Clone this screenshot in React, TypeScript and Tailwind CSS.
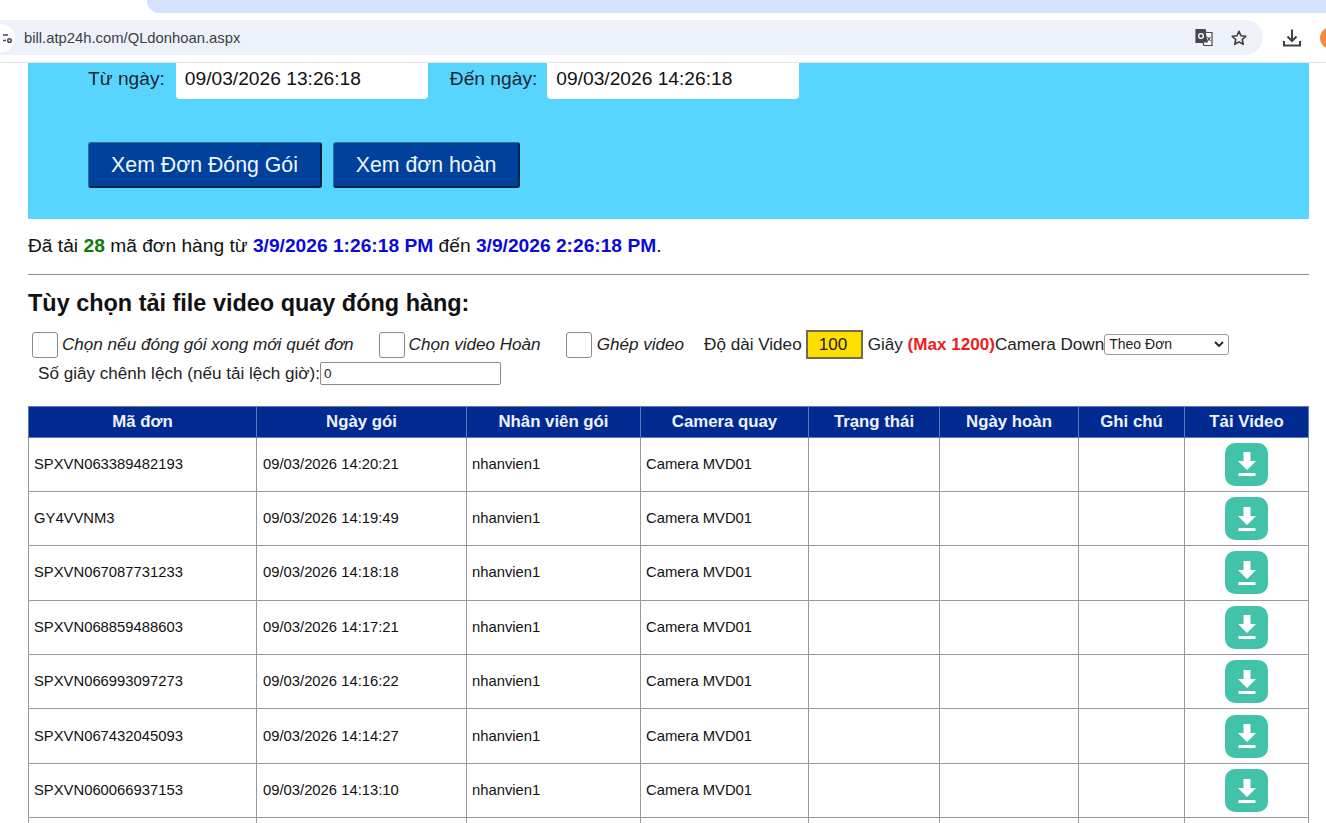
const font = "font-['Liberation_Sans',Arial,sans-serif]";

const rows = [
  ["SPXVN063389482193", "09/03/2026 14:20:21"],
  ["GY4VVNM3", "09/03/2026 14:19:49"],
  ["SPXVN067087731233", "09/03/2026 14:18:18"],
  ["SPXVN068859488603", "09/03/2026 14:17:21"],
  ["SPXVN066993097273", "09/03/2026 14:16:22"],
  ["SPXVN067432045093", "09/03/2026 14:14:27"],
  ["SPXVN060066937153", "09/03/2026 14:13:10"],
];

const headers = ["Mã đơn", "Ngày gói", "Nhân viên gói", "Camera quay", "Trạng thái", "Ngày hoàn", "Ghi chú", "Tải Video"];
const widths = ["w-[228px]", "w-[210px]", "w-[174px]", "w-[168px]", "w-[131px]", "w-[139px]", "w-[106px]", "w-[124px]"];

function DownloadButton() {
  return (
    <div className="mx-auto flex h-[43px] w-[43px] items-center justify-center rounded-[10px] bg-[#42c2a8]">
      <svg width="24" height="28" viewBox="0 0 24 28" fill="#ffffff">
        <path d="M8.5 2h7v9h5.5L12 20 3 11h5.5z" />
        <rect x="3.5" y="23" width="17" height="3" />
      </svg>
    </div>
  );
}

function BrowserBar() {
  return (
    <div className="h-[63px] border-b border-[#e3e6ea] bg-white">
      <div className="ml-[147px] h-[13px] rounded-bl-[12px] bg-[#d3e3fd]" />
      <div className="mt-[7px] flex items-center">
        <div className="flex h-[35px] w-[1263px] shrink-0 items-center rounded-r-[18px] bg-[#edf2fa]">
          <div className="flex h-[28px] w-[15px] items-center justify-end rounded-r-full bg-white pr-[2px]">
            <svg width="10" height="12" viewBox="0 0 10 12" fill="none" stroke="#45484d" strokeWidth="1.5">
              <path d="M0 3h5M0 8.5h3" />
              <circle cx="6.5" cy="8.5" r="1.8" />
            </svg>
          </div>
          <span className="ml-[9px] pt-[1px] text-[14.8px] text-[#3c4043]">bill.atp24h.com/QLdonhoan.aspx</span>
          <div className="ml-auto flex items-center gap-[16px] pr-[15px]">
            <svg width="19" height="19" viewBox="0 0 19 19">
              <path d="M1 1.5h9l1 3h6v13H9l-1-3H1z" fill="#ffffff" stroke="#45484d" strokeWidth="1.2" />
              <path d="M1 1.5h9l3 13H1z" fill="#45484d" />
              <circle cx="6" cy="8" r="2.4" fill="none" stroke="#ffffff" strokeWidth="1.3" />
              <path d="M12.5 9l3 4M15.5 9l-3 4" stroke="#45484d" strokeWidth="1.1" />
            </svg>
            <svg width="18" height="18" viewBox="0 0 24 24" fill="none" stroke="#3c4043" strokeWidth="2.2" strokeLinejoin="round">
              <path d="M12 3l2.7 6 6.3.7-4.7 4.3 1.3 6.4L12 17.2l-5.6 3.2 1.3-6.4L3 9.7 9.3 9z" />
            </svg>
          </div>
        </div>
        <svg className="ml-[19px] shrink-0" width="20" height="20" viewBox="0 0 20 20" fill="none" stroke="#3c4043" strokeWidth="2">
          <path d="M10 1.5v11M5.5 8.5l4.5 4.5 4.5-4.5M2 13v4.5h16V13" />
        </svg>
        <div className="ml-[18px] h-[22px] w-[22px] shrink-0 rounded-full bg-[#f58a3c]" />
      </div>
    </div>
  );
}

export default function App() {
  return (
    <div className={`${font} h-[823px] w-[1326px] overflow-hidden bg-white text-black`}>
      <BrowserBar />
      <div className="pl-[28px] pr-[17px]">
        <div className="h-[156px] bg-[#57d5ff] pl-[60px]">
          <div className="flex items-start">
            <span className="mt-[4px] text-[19.2px] leading-[23px] text-[#1c2530]">Từ ngày:</span>
            <div className="ml-[11px] h-[36px] w-[252px] rounded-b-[4px] bg-white pl-[9px] pt-[4px] text-[19.2px] leading-[23px] text-[#111]">09/03/2026 13:26:18</div>
            <span className="ml-[22px] mt-[4px] text-[19.2px] leading-[23px] text-[#1c2530]">Đến ngày:</span>
            <div className="ml-[10px] h-[36px] w-[252px] rounded-b-[4px] bg-white pl-[9px] pt-[4px] text-[19.2px] leading-[23px] text-[#111]">09/03/2026 14:26:18</div>
          </div>
          <div className="mt-[43px] flex gap-[11px]">
            <div className="flex h-[46px] w-[234px] items-center justify-center rounded-[3px] border border-[#2c6ea3] border-b-2 border-r-2 border-b-[#04233f] border-r-[#04233f] bg-[#00419b] pt-[2px] text-[21.3px] text-[#eef6ff]">Xem Đơn Đóng Gói</div>
            <div className="flex h-[46px] w-[187px] items-center justify-center rounded-[3px] border border-[#2c6ea3] border-b-2 border-r-2 border-b-[#04233f] border-r-[#04233f] bg-[#00419b] pt-[2px] text-[21.3px] text-[#eef6ff]">Xem đơn hoàn</div>
          </div>
        </div>

        <p className="mt-[16px] text-[19.2px] leading-[21px] text-[#111]">
          Đã tải <b className="text-[#0a7a0a]">28</b> mã đơn hàng từ <b className="text-[#0a0ad8]">3/9/2026 1:26:18 PM</b> đến <b className="text-[#0a0ad8]">3/9/2026 2:26:18 PM</b>.
        </p>
        <div className="mt-[18px] h-px bg-[#7d8f99]" />
        <h2 className="mt-[15px] text-[23.45px] font-bold leading-[26px] text-[#111]">Tùy chọn tải file video quay đóng hàng:</h2>

        <div className="mt-[14px] flex items-center pl-[4px] text-[17.1px] leading-[19px] text-[#222]">
          <div className="h-[26px] w-[26px] rounded-[3px] border border-[#8a8a8a] bg-white" />
          <i className="ml-[4px]">Chọn nếu đóng gói xong mới quét đơn</i>
          <div className="ml-[25px] h-[26px] w-[26px] rounded-[3px] border border-[#8a8a8a] bg-white" />
          <i className="ml-[4px]">Chọn video Hoàn</i>
          <div className="ml-[25px] h-[26px] w-[26px] rounded-[3px] border border-[#8a8a8a] bg-white" />
          <i className="ml-[5px]">Ghép video</i>
          <span className="ml-[20px]">Độ dài Video</span>
          <div className="ml-[4px] h-[29px] w-[57px] border-2 border-[#6f6a50] bg-[#ffdf00] pl-[11px] pt-[3px]">100</div>
          <span className="ml-[5px]">Giây&nbsp;</span>
          <b className="text-[#ee1c1c]">(Max 1200)</b>
          <span>Camera Down</span>
          <div className="flex h-[21px] w-[125px] items-center justify-between rounded-[3px] border border-[#9a9a9a] bg-white pl-[4px] pr-[4px] text-[14px]">
            <span>Theo Đơn</span>
            <svg width="10" height="7" viewBox="0 0 10 7" fill="none" stroke="#222" strokeWidth="1.8">
              <path d="M1 1l4 4 4-4" />
            </svg>
          </div>
        </div>
        <div className="mt-[3px] flex items-center pl-[10px] text-[17.1px] leading-[19px] text-[#222]">
          <span>Số giây chênh lệch (nếu tải lệch giờ):</span>
          <div className="h-[23px] w-[181px] rounded-[2px] border border-[#8a8a8a] bg-white pl-[3px] text-[13.5px] leading-[21px]">0</div>
        </div>

        <table className="mt-[21px] w-[1280px] table-fixed border-collapse">
          <thead>
            <tr className="h-[30.5px] bg-[#002a90]">
              {headers.map((h, i) => (
                <th key={h} className={`${widths[i]} border border-[#5f78b8] text-center text-[16.8px] font-bold text-[#eef2ff]`}>{h}</th>
              ))}
            </tr>
          </thead>
          <tbody>
            {rows.map((r) => (
              <tr key={r[0]} className="h-[54.4px] text-[14.8px] text-[#111]">
                <td className="border border-[#999] px-[5px] pb-[1px]">{r[0]}</td>
                <td className="border border-[#999] px-[6px] pb-[1px]">{r[1]}</td>
                <td className="border border-[#999] px-[5px] pb-[1px]">nhanvien1</td>
                <td className="border border-[#999] px-[5px] pb-[1px]">Camera MVD01</td>
                <td className="border border-[#999]" />
                <td className="border border-[#999]" />
                <td className="border border-[#999]" />
                <td className="border border-[#999]">
                  <DownloadButton />
                </td>
              </tr>
            ))}
            {/* next row starts at the bottom edge of the window */}
            <tr className="h-[54.4px]">
              {headers.map((h) => (
                <td key={h} className="border border-[#999]" />
              ))}
            </tr>
          </tbody>
        </table>
      </div>
    </div>
  );
}
